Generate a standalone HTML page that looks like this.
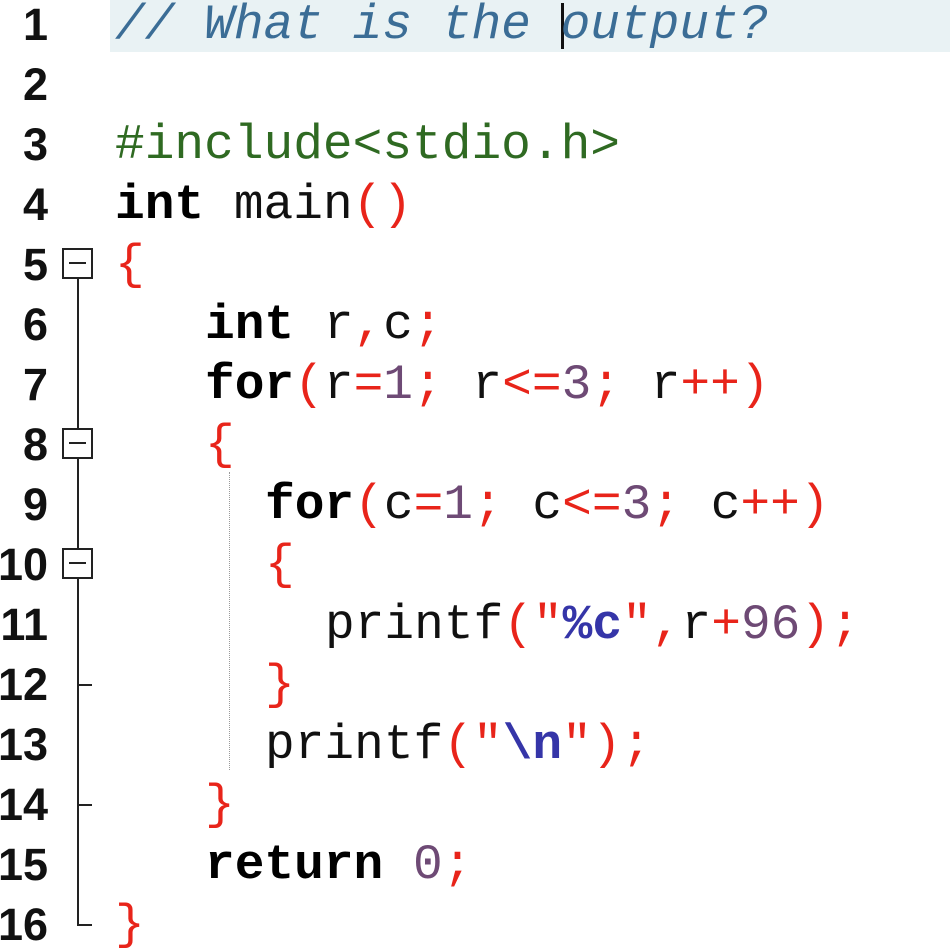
<!DOCTYPE html>
<html><head><meta charset="utf-8"><style>
html,body{margin:0;padding:0;background:#fff;width:950px;height:950px;overflow:hidden;position:relative}
.l{position:absolute;left:0;height:60px;line-height:60px;font-family:"Liberation Mono",monospace;font-size:49.5px;white-space:pre;color:#111}
.n{position:absolute;right:902px;height:60px;line-height:60px;font-family:"Liberation Sans",sans-serif;font-size:45px;font-weight:bold;color:#111;text-align:right}
.k{font-weight:bold;color:#000}
.p{color:#e8241a}
.d{color:#6e4a75}
.s{color:#3535a8;font-weight:bold}
.c{color:#3b6d96;font-style:italic}
.g{color:#2f6a22}
.box{position:absolute;left:62px;width:27px;height:27px;border:2px solid #222;background:#fff}
.box:after{content:"";position:absolute;left:5px;right:5px;top:12px;height:2px;background:#222}
.tick{position:absolute;left:77px;width:15px;height:2px;background:#222}
</style></head><body>
<div style="position:absolute;left:110px;top:0;width:840px;height:52px;background:#e9f2f4"></div>
<div style="position:absolute;left:561px;top:3px;width:3px;height:46px;background:#111"></div>
<div style="position:absolute;left:77px;top:278px;width:2px;height:648px;background:#222"></div>
<div style="position:absolute;left:229px;top:472px;width:0;height:298px;border-left:1px dotted #999"></div>
<div class="box" style="top:248px"></div>
<div class="box" style="top:428px"></div>
<div class="box" style="top:548px"></div>
<div class="tick" style="top:684px"></div>
<div class="tick" style="top:804px"></div>
<div class="tick" style="top:924px"></div>

<div class="n" style="top:-5px">1</div>
<div class="n" style="top:55px">2</div>
<div class="n" style="top:115px">3</div>
<div class="n" style="top:175px">4</div>
<div class="n" style="top:235px">5</div>
<div class="n" style="top:295px">6</div>
<div class="n" style="top:355px">7</div>
<div class="n" style="top:415px">8</div>
<div class="n" style="top:475px">9</div>
<div class="n" style="top:535px">10</div>
<div class="n" style="top:595px">11</div>
<div class="n" style="top:655px">12</div>
<div class="n" style="top:715px">13</div>
<div class="n" style="top:775px">14</div>
<div class="n" style="top:835px">15</div>
<div class="n" style="top:895px">16</div>

<div class="l c" style="top:-5px;left:115px">// What is the output?</div>
<div class="l g" style="top:115px;left:115px">#include&lt;stdio.h&gt;</div>
<div class="l" style="top:175px;left:115px"><span class="k">int</span> main<span class="p">()</span></div>
<div class="l p" style="top:235px;left:115px">{</div>
<div class="l" style="top:295px;left:205px"><span class="k">int</span> r<span class="p">,</span>c<span class="p">;</span></div>
<div class="l" style="top:355px;left:205px"><span class="k">for</span><span class="p">(</span>r<span class="p">=</span><span class="d">1</span><span class="p">;</span> r<span class="p">&lt;=</span><span class="d">3</span><span class="p">;</span> r<span class="p">++)</span></div>
<div class="l p" style="top:415px;left:205px">{</div>
<div class="l" style="top:475px;left:265px"><span class="k">for</span><span class="p">(</span>c<span class="p">=</span><span class="d">1</span><span class="p">;</span> c<span class="p">&lt;=</span><span class="d">3</span><span class="p">;</span> c<span class="p">++)</span></div>
<div class="l p" style="top:535px;left:265px">{</div>
<div class="l" style="top:595px;left:325px">printf<span class="p">(</span><span class="p">"</span><span class="s">%c</span><span class="p">",</span>r<span class="p">+</span><span class="d">96</span><span class="p">);</span></div>
<div class="l p" style="top:655px;left:265px">}</div>
<div class="l" style="top:715px;left:265px">printf<span class="p">(</span><span class="p">"</span><span class="s">\n</span><span class="p">");</span></div>
<div class="l p" style="top:775px;left:205px">}</div>
<div class="l" style="top:835px;left:205px"><span class="k">return</span> <span class="d">0</span><span class="p">;</span></div>
<div class="l p" style="top:895px;left:115px">}</div>
</body></html>
